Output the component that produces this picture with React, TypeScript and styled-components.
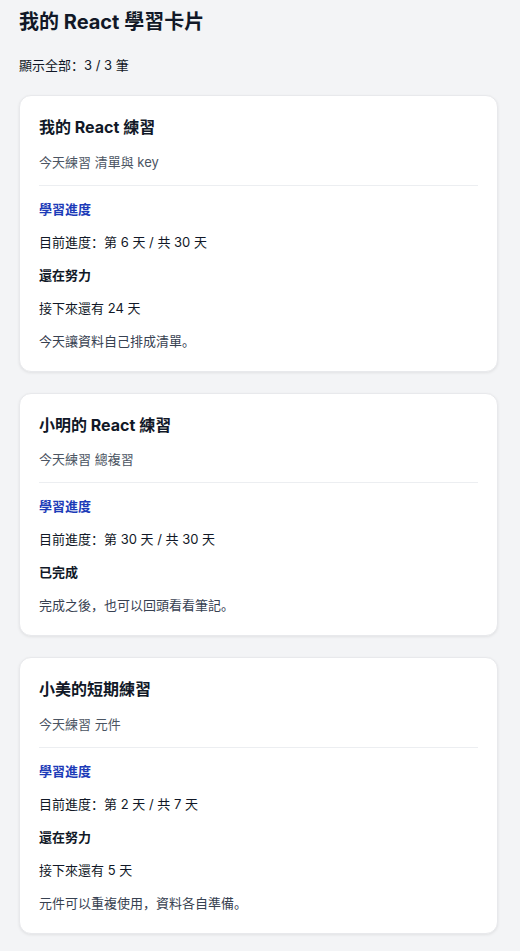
import { FC } from 'react';
import styled, { createGlobalStyle } from 'styled-components';

const GlobalStyle = createGlobalStyle`
    * {
        box-sizing: border-box;
    }
    body {
        margin: 0;
        background: #f3f4f6;
        font-family: Inter, 'Noto Sans CJK SC', 'Noto Sans', sans-serif;
        color: #111827;
    }
`;

const Page = styled.main`
    padding: 8px 22px 17px 19px;
`;

const PageTitle = styled.h1`
    margin: 0;
    font-size: 20px;
    line-height: 28px;
    font-weight: 700;
`;

const Summary = styled.p`
    margin: 19px 0 20px;
    font-size: 13px;
    line-height: 20px;
`;

const CardList = styled.div`
    display: flex;
    flex-direction: column;
    gap: 21px;
`;

const StyledCard = styled.article`
    background: #fff;
    border: 1px solid #e8e9ec;
    border-radius: 12px;
    padding: 19px 19px 20px;
    box-shadow: 0 1px 3px rgba(0, 0, 0, 0.08);
    display: flex;
    flex-direction: column;
`;

const Name = styled.h3`
    margin: 0;
    font-size: 16px;
    line-height: 24px;
    font-weight: 700;
`;

const Topic = styled.p`
    margin: 12.5px 0 0;
    font-size: 13px;
    line-height: 20px;
    color: #4b5563;
`;

const Divider = styled.hr`
    border: none;
    border-top: 1px solid #eceef1;
    margin: 13px 0 0;
`;

const Line = styled.p<{ $tone?: 'label' | 'strong' | 'muted' }>`
    margin: 13px 0 0;
    font-size: 13px;
    line-height: 20px;
    font-weight: ${({ $tone }) => ($tone === 'label' || $tone === 'strong' ? 700 : 400)};
    color: ${({ $tone }) =>
        $tone === 'label' ? '#1c3bb8' : $tone === 'muted' ? '#374151' : '#111827'};
`;

interface ICard {
    name: string;
    topic: string;
    day: number;
    total: number;
    note: string;
}

const cards: ICard[] = [
    { name: '我的 React 練習', topic: '清單與 key', day: 6, total: 30, note: '今天讓資料自己排成清單。' },
    { name: '小明的 React 練習', topic: '總複習', day: 30, total: 30, note: '完成之後，也可以回頭看看筆記。' },
    { name: '小美的短期練習', topic: '元件', day: 2, total: 7, note: '元件可以重複使用，資料各自準備。' },
];

const Card: FC<ICard> = ({ name, topic, day, total, note }) => {
    const done = day >= total;
    return (
        <StyledCard>
            <Name>{name}</Name>
            <Topic>今天練習 {topic}</Topic>
            <Divider />
            <Line $tone="label">學習進度</Line>
            <Line>
                目前進度：第 {day} 天 / 共 {total} 天
            </Line>
            <Line $tone="strong">{done ? '已完成' : '還在努力'}</Line>
            {!done && <Line>接下來還有 {total - day} 天</Line>}
            <Line $tone="muted">{note}</Line>
        </StyledCard>
    );
};

const App: FC = () => (
    <>
        <GlobalStyle />
        <Page>
            <PageTitle>我的 React 學習卡片</PageTitle>
            <Summary>
                顯示全部：{cards.length} / {cards.length} 筆
            </Summary>
            <CardList>
                {cards.map((card) => (
                    <Card key={card.name} {...card} />
                ))}
            </CardList>
        </Page>
    </>
);

export default App;
